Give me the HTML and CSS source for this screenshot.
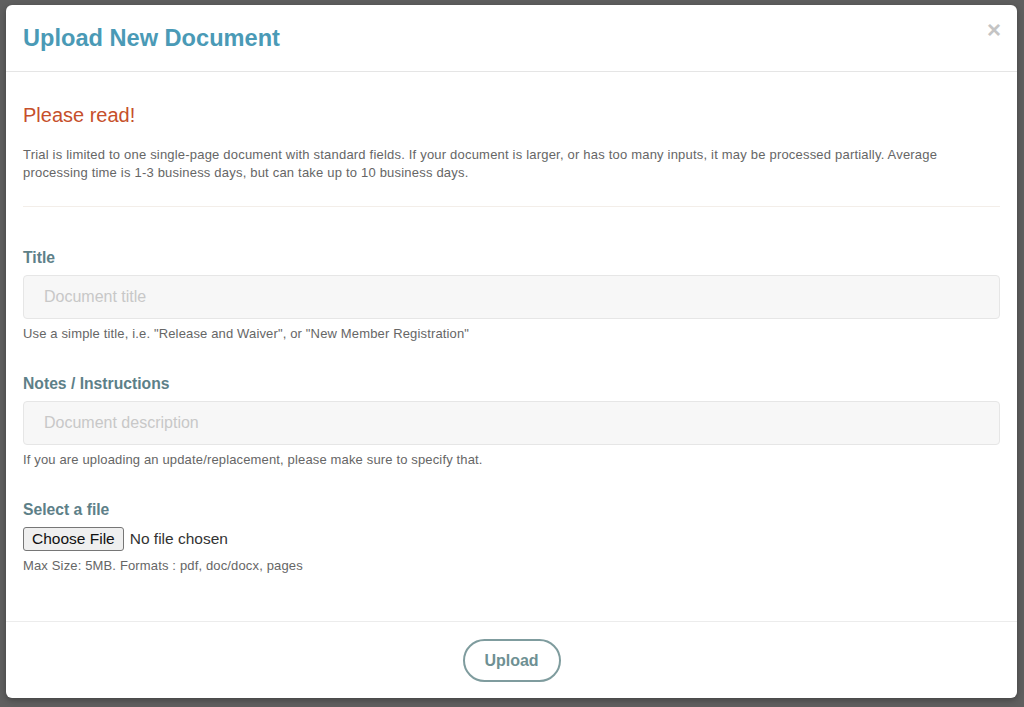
FILE: index.html
```html
<!DOCTYPE html>
<html>
<head>
<meta charset="utf-8">
<link rel="stylesheet" href="styles.css">
</head>
<body>
<div class="backdrop">
  <div class="modal">
    <div class="modal-header">
      <h2 class="modal-title">Upload New Document</h2>
      <span class="close">&times;</span>
    </div>
    <div class="modal-body">
      <h4 class="notice-title">Please read!</h4>
      <p class="notice-text">Trial is limited to one single-page document with standard fields. If your document is larger, or has too many inputs, it may be processed partially. Average processing time is 1-3 business days, but can take up to 10 business days.</p>
      <hr class="divider">
      <div class="field">
        <label class="field-label">Title</label>
        <input class="field-input" type="text" placeholder="Document title">
        <div class="help">Use a simple title, i.e. "Release and Waiver", or "New Member Registration"</div>
      </div>
      <div class="field">
        <label class="field-label">Notes / Instructions</label>
        <input class="field-input" type="text" placeholder="Document description">
        <div class="help">If you are uploading an update/replacement, please make sure to specify that.</div>
      </div>
      <div class="field">
        <label class="field-label">Select a file</label>
        <div class="file-row"><span class="file-btn">Choose File</span><span class="file-name">No file chosen</span></div>
        <div class="help">Max Size: 5MB. Formats : pdf, doc/docx, pages</div>
      </div>
    </div>
    <div class="modal-footer">
      <button class="upload-btn">Upload</button>
    </div>
  </div>
</div>
</body>
</html>
```
FILE: styles.css
```css
html, body {
  margin: 0;
  padding: 0;
  height: 100%;
}
body {
  background: #5f5f5f;
  font-family: "Liberation Sans", Arial, sans-serif;
  overflow: hidden;
}
.backdrop {
  padding: 5px 7px 0 6px;
}
.modal {
  background: #fff;
  border-radius: 6px;
  height: 693px;
  display: flex;
  flex-direction: column;
  box-shadow: 0 2px 6px rgba(0,0,0,0.3);
}
.modal-header {
  height: 67px;
  border-bottom: 1px solid #e5e5e5;
  display: flex;
  align-items: center;
  justify-content: space-between;
  padding: 0 17px;
  box-sizing: border-box;
}
.modal-title {
  margin: 0;
  font-size: 23.6px;
  font-weight: bold;
  color: #4a9ab6;
  padding-top: 0;
}
.close {
  font-size: 24px;
  font-weight: bold;
  color: #c4c4c4;
  align-self: flex-start;
  margin-top: 13px;
  margin-right: -1px;
  line-height: 1;
}
.modal-body {
  flex: 1;
  padding: 32px 17px 0 17px;
}
.notice-title {
  margin: 0;
  font-size: 20px;
  font-weight: normal;
  line-height: 22px;
  color: #c64f2b;
}
.notice-text {
  margin: 20px 0 0 0;
  font-size: 13px;
  letter-spacing: 0.2px;
  line-height: 18px;
  color: #666;
}
.divider {
  margin: 24px 0 0 0;
  border: 0;
  border-top: 1px solid #f3eee9;
}
.field {
  display: flex;
  flex-direction: column;
}
.field:first-of-type {
  margin-top: 41px;
}
.field + .field {
  margin-top: 31px;
}
.field-label {
  font-size: 15.7px;
  font-weight: bold;
  line-height: 18px;
  padding-top: 1px;
  color: #5d8088;
}
.field-input {
  margin-top: 8px;
  height: 44px;
  box-sizing: border-box;
  background: #f7f7f7;
  border: 1px solid #e6e6e6;
  border-radius: 4px;
  padding: 0 20px;
  font-family: "Liberation Sans", Arial, sans-serif;
  font-size: 16px;
  color: #555;
}
.field-input::placeholder {
  color: #c8c8c8;
}
.help {
  margin-top: 6px;
  font-size: 13px;
  letter-spacing: 0.15px;
  line-height: 18px;
  color: #666;
}
.file-row {
  margin-top: 8px;
  display: flex;
  align-items: center;
  height: 24px;
}
.file-btn {
  height: 24px;
  box-sizing: border-box;
  border: 1px solid #767676;
  border-radius: 3px;
  background: #efefef;
  padding: 0 8px;
  font-size: 15.5px;
  line-height: 22px;
  color: #111;
  white-space: nowrap;
}
.file-name {
  margin-left: 6px;
  font-size: 15.5px;
  color: #333;
  white-space: nowrap;
}
.modal-footer {
  border-top: 1px solid #ececec;
  height: 77px;
  box-sizing: border-box;
  display: flex;
  align-items: center;
  justify-content: center;
}
.upload-btn {
  width: 98px;
  height: 43px;
  border: 2px solid #7f9c9e;
  border-radius: 22px;
  background: #fff;
  font-family: "Liberation Sans", Arial, sans-serif;
  font-size: 16px;
  font-weight: bold;
  color: #6e9093;
  margin-top: 1px;
}
```
